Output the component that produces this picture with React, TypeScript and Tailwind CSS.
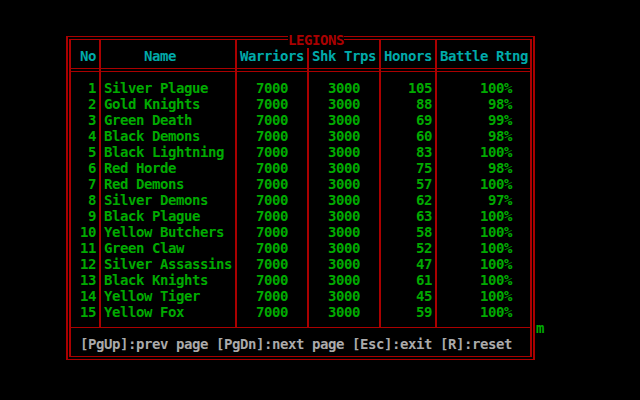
const legions: [string, string, string, string][] = [
  ["1", "Silver Plague", "105", "100%"],
  ["2", "Gold Knights", "88", "98%"],
  ["3", "Green Death", "69", "99%"],
  ["4", "Black Demons", "60", "98%"],
  ["5", "Black Lightning", "83", "100%"],
  ["6", "Red Horde", "75", "98%"],
  ["7", "Red Demons", "57", "100%"],
  ["8", "Silver Demons", "62", "97%"],
  ["9", "Black Plague", "63", "100%"],
  ["10", "Yellow Butchers", "58", "100%"],
  ["11", "Green Claw", "52", "100%"],
  ["12", "Silver Assassins", "47", "100%"],
  ["13", "Black Knights", "61", "100%"],
  ["14", "Yellow Tiger", "45", "100%"],
  ["15", "Yellow Fox", "59", "100%"],
];

const grid = "grid grid-cols-[28px_136px_72px_72px_56px_95px]";
const bar = "border-l-2 border-[#aa0000]";

function Blank({ h }: { h: string }) {
  return (
    <div className={grid}>
      <div className={h} />
      {[1, 2, 3, 4, 5].map((i) => (
        <div key={i} className={`${h} ${bar}`} />
      ))}
    </div>
  );
}

export default function App() {
  return (
    <div className="flex h-[400px] w-[640px] items-start overflow-hidden bg-black pl-[66px] pt-[36px] font-['DejaVu_Sans_Mono',monospace] text-[14px] font-bold leading-[16px] tracking-[-0.428px]">
      <div className="relative h-[324px] w-[469px] border-x-2 border-y border-[#aa0000]">
        <span className="absolute left-[220px] top-[-5px] h-[16px] bg-black text-[#aa0000]">
          LEGIONS
        </span>

        <div className="ml-[1px] mt-[2px] flex h-[318px] w-[463px] flex-col border-x-2 border-y border-[#aa0000]">
          {/* header */}
          <div className={`${grid} text-[#00aaaa]`}>
            <div className="h-[28px] pr-[3px] pt-[8px] text-right">No</div>
            <div className={`${bar} h-[28px] pl-[43px] pt-[8px]`}>Name</div>
            <div className={`${bar} h-[28px] pl-[3px] pt-[8px]`}>Warriors</div>
            <div className={`${bar} h-[28px] pl-[3px] pt-[8px]`}>Shk Trps</div>
            <div className={`${bar} h-[28px] pl-[3px] pt-[8px]`}>Honors</div>
            <div className={`${bar} h-[28px] pl-[3px] pt-[8px]`}>Battle Rtng</div>
          </div>

          {/* double rule under header */}
          <div className={grid}>
            <div className="h-[4px] border-y border-[#aa0000]" />
            {[1, 2, 3, 4, 5].map((i) => (
              <div key={i} className={`${bar} h-[4px] border-y`} />
            ))}
          </div>

          <Blank h="h-[8px]" />
          {legions.map(([no, name, honors, rating]) => (
            <div className={`${grid} h-[16px] text-[#00aa00]`} key={no}>
              <div className="pr-[3px] text-right">{no}</div>
              <div className={`${bar} whitespace-pre pl-[3px]`}>{name}</div>
              <div className={`${bar} pl-[19px]`}>7000</div>
              <div className={`${bar} pl-[19px]`}>3000</div>
              <div className={`${bar} pr-[3px] text-right`}>{honors}</div>
              <div className={`${bar} pr-[18px] text-right`}>{rating}</div>
            </div>
          ))}
          <Blank h="h-[7px]" />

          <div className="h-[29px] whitespace-pre border-t border-[#aa0000] pl-[9px] pt-[8px] text-[#aaaaaa]">
            [PgUp]:prev page [PgDn]:next page [Esc]:exit [R]:reset
          </div>
        </div>
      </div>

      <span className="ml-[1px] mt-[284px] text-[#00aa00]">m</span>
    </div>
  );
}
